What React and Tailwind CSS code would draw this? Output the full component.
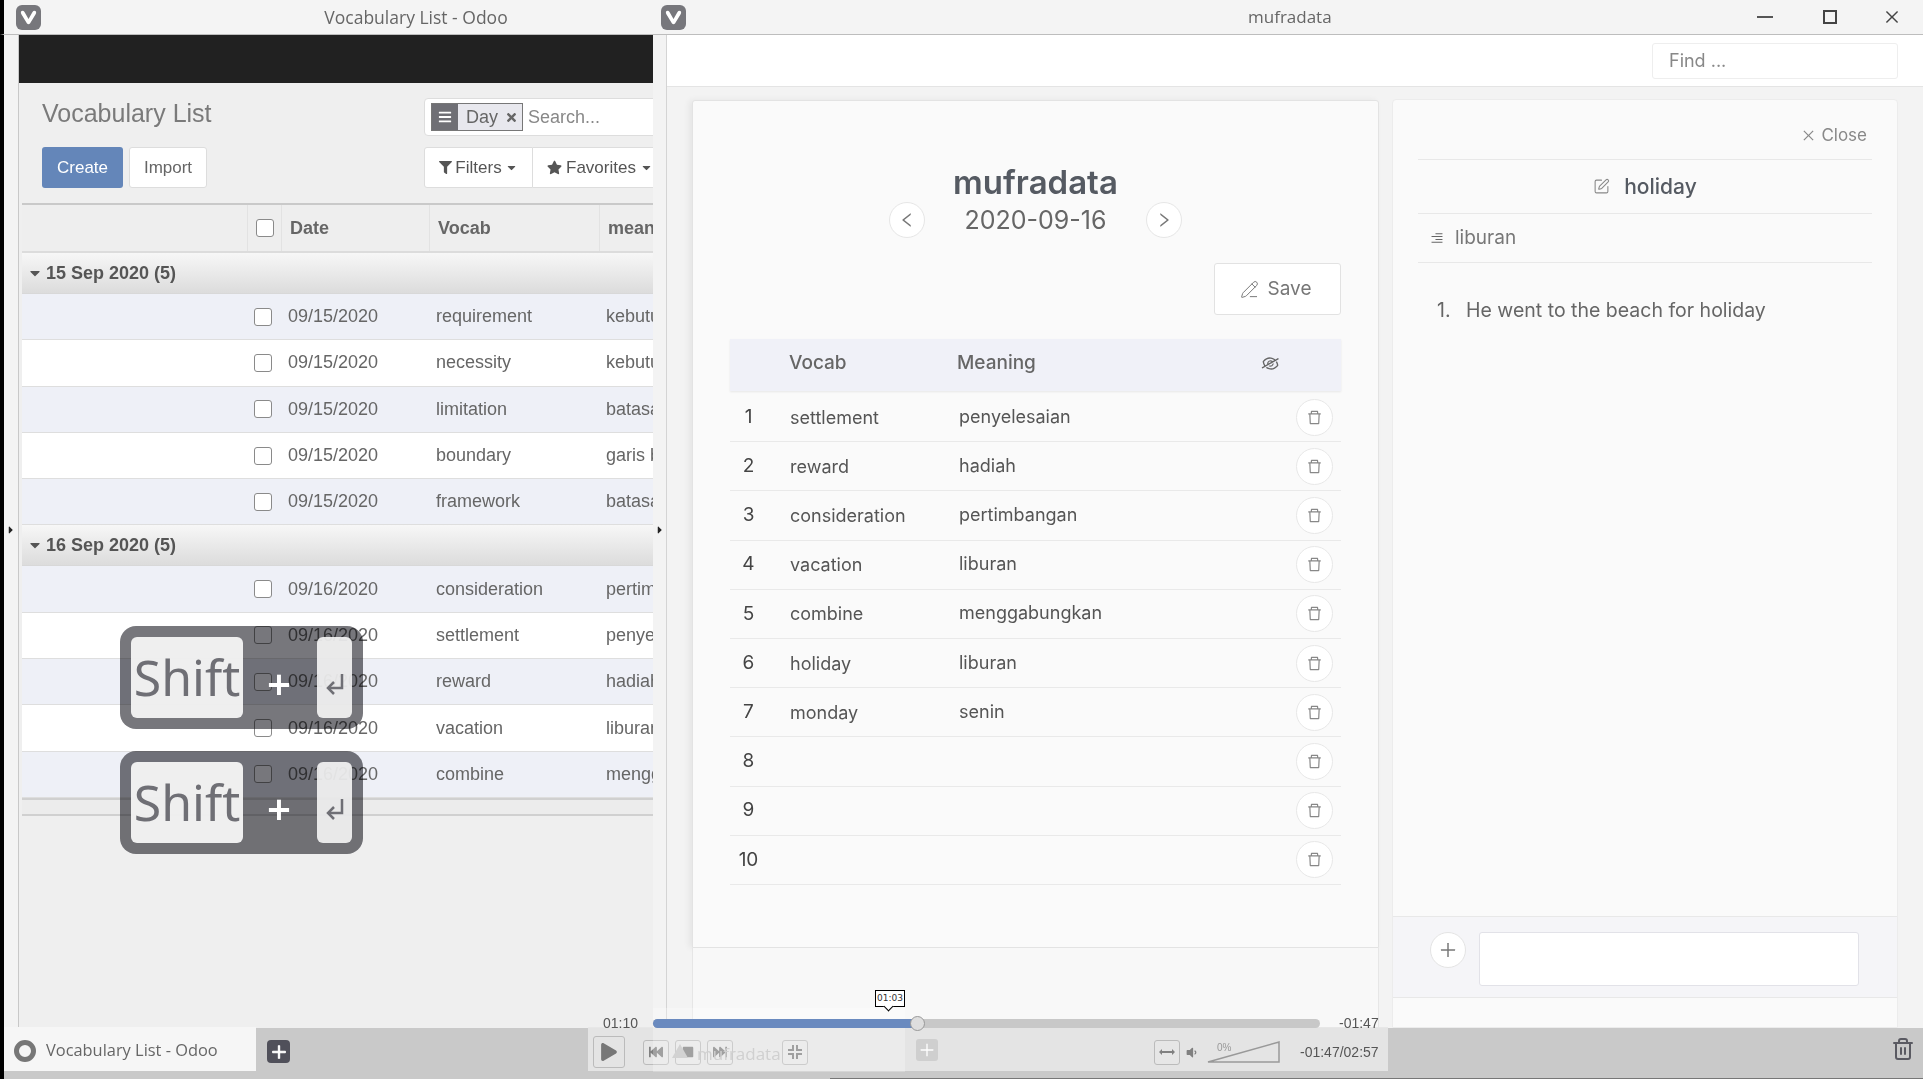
import React from 'react'
import { FaBars, FaFilter, FaStar, FaTimes, FaCaretDown, FaCaretRight, FaPlay, FaFastBackward, FaFastForward, FaStop, FaVolumeDown } from 'react-icons/fa'
import {
  AiOutlineAlignRight,
  AiOutlineClose,
  AiOutlineDelete,
  AiOutlineEyeInvisible,
  AiOutlineLeft,
  AiOutlinePlus,
  AiOutlineRight,
} from 'react-icons/ai'
import { PencilLine, SquarePen, Trash2 } from 'lucide-react'

const GROUPS = [
  {
    label: '15 Sep 2020 (5)',
    rows: [
      ['09/15/2020', 'requirement', 'kebutuhan'],
      ['09/15/2020', 'necessity', 'kebutuhan'],
      ['09/15/2020', 'limitation', 'batasan'],
      ['09/15/2020', 'boundary', 'garis batas'],
      ['09/15/2020', 'framework', 'batasan'],
    ],
  },
  {
    label: '16 Sep 2020 (5)',
    rows: [
      ['09/16/2020', 'consideration', 'pertimbangan'],
      ['09/16/2020', 'settlement', 'penyelesaian'],
      ['09/16/2020', 'reward', 'hadiah'],
      ['09/16/2020', 'vacation', 'liburan'],
      ['09/16/2020', 'combine', 'menggabungkan'],
    ],
  },
]

const VOCAB = [
  ['settlement', 'penyelesaian'],
  ['reward', 'hadiah'],
  ['consideration', 'pertimbangan'],
  ['vacation', 'liburan'],
  ['combine', 'menggabungkan'],
  ['holiday', 'liburan'],
  ['monday', 'senin'],
  ['', ''],
  ['', ''],
  ['', ''],
]

function VivaldiIcon() {
  return (
    <div className="w-[25px] h-[25px] shrink-0 rounded-[6px] bg-[#77777c] flex items-center justify-center">
      <svg width="17" height="15" viewBox="0 0 17 15">
        <path d="M1 1.5 Q3 0 4.5 2 L8.5 9 L12.5 2 Q14 0 16 1.5 Q16.500 3 15.500 4.500 L10 13.500 Q8.500 15 7 13.500 L1.500 4.500 Q0.500 3 1 1.500Z" fill="#fff" />
      </svg>
    </div>
  )
}

function Check() {
  return <div className="w-[18px] h-[18px] rounded-[3px] border border-[#8a8a8a] bg-white" />
}

function OdooRow({ row, odd }) {
  return (
    <div className={`h-[46.300px] grid grid-cols-[232px_34px_148px_170px_1fr] items-center border-b border-[#dedede] text-[18px] text-[#666] whitespace-nowrap ${odd ? 'bg-[#eef0f7]' : 'bg-white'}`}>
      <div />
      <div className="flex justify-start"><Check /></div>
      <div>{row[0]}</div>
      <div>{row[1]}</div>
      <div className="overflow-hidden">{row[2]}</div>
    </div>
  )
}

function OdooGroup({ group }) {
  return (
    <div>
      <div className="h-[41px] flex items-center pl-[5px] gap-[3px] bg-gradient-to-b from-[#f7f7f7] to-[#dcdcdc] border-b border-[#d8d8d8] text-[18px] font-bold text-[#555]">
        <FaCaretDown className="text-[#555] text-[16px]" />
        <span>{group.label}</span>
      </div>
      {group.rows.map((r, i) => (
        <OdooRow key={r[1]} row={r} odd={i % 2 === 0} />
      ))}
    </div>
  )
}

function LeftWindow() {
  return (
    <div className="w-[667px] flex bg-[#f3f3f3] border-r border-[#d4d4d4] border-l-[4px] border-l-black font-['Liberation_Sans',sans-serif]">
      <div className="w-[14px]" />
      <div className="w-[635px] flex flex-col bg-[#efefef] border-l border-[#c8c8c8] overflow-hidden">
        <div className="h-[48px] shrink-0 bg-[#212121]" />
        <div className="h-[120px] shrink-0 relative px-[23px] pt-[15px]">
          <div className="flex justify-between">
            <div className="text-[25px] leading-[32px] text-[#7a7a7a] -mt-px">Vocabulary List</div>
            <div className="w-[240px] mr-[-34px] h-[38px] bg-white border border-[#ddd] rounded-l-[4px] flex items-center pl-[6px] shrink-0">
              <div className="h-[28px] w-[92px] flex items-center border border-[#777] bg-[#e8e8ee] text-[#666] text-[18px]">
                <div className="w-[26px] h-full bg-[#6f6f75] flex items-center justify-center"><FaBars className="text-white text-[14px]" /></div>
                <span className="ml-[8px]">Day</span>
                <FaTimes className="ml-[7px] text-[13px] text-[#666]" />
              </div>
              <span className="ml-[5px] text-[18px] text-[#888]">Search...</span>
            </div>
          </div>
          <div className="flex justify-between mt-[11px] text-[17px]">
            <div className="flex gap-[6px]">
              <div className="w-[81px] h-[41px] rounded-[3px] bg-[#6486b9] text-white flex items-center justify-center">Create</div>
              <div className="w-[78px] h-[41px] rounded-[3px] bg-white border border-[#ddd] text-[#666] flex items-center justify-center">Import</div>
            </div>
            <div className="flex h-[41px] w-[240px] mr-[-34px] shrink-0 text-[#555] whitespace-nowrap">
              <div className="w-[109px] bg-white border border-[#ddd] rounded-l-[3px] flex items-center justify-center gap-[3px]">
                <FaFilter className="text-[13px] text-[#555]" />
                <span>Filters</span>
                <FaCaretDown className="text-[13px]" />
              </div>
              <div className="flex-1 bg-white border border-[#ddd] border-l-0 flex items-center pl-[14px] gap-[4px]">
                <FaStar className="text-[15px] text-[#555]" />
                <span>Favorites</span>
                <FaCaretDown className="text-[13px]" />
              </div>
            </div>
          </div>
        </div>
        <div className="ml-[3px] border-t-2 border-[#c9c9c9]">
          <div className="h-[48px] grid grid-cols-[226px_34px_148px_170px_1fr] items-center border-b-2 border-[#dcdcdc] bg-[#eeeeee] text-[18px] font-bold text-[#666] whitespace-nowrap">
            <div className="h-full ml-[1px] border-r border-[#e2e2e2]" />
            <div className="h-full flex items-center justify-center border-r border-[#e2e2e2]"><Check /></div>
            <div className="h-full flex items-center pl-[8px] border-r border-[#e2e2e2]">Date</div>
            <div className="h-full flex items-center pl-[8px] border-r border-[#e2e2e2]">Vocab</div>
            <div className="pl-[8px] overflow-hidden">meaning</div>
          </div>
          {GROUPS.map((g) => (
            <OdooGroup key={g.label} group={g} />
          ))}
          <div className="h-[18px] bg-[#ececec] border-t-2 border-b-2 border-[#d0d0d0]" />
        </div>
      </div>
    </div>
  )
}

function VocabRow({ index, row }) {
  return (
    <div className="h-[49.200px] grid grid-cols-[60px_169px_1fr_45px] items-center border-b border-[#e9e9e9] text-[18px] text-[#555] whitespace-nowrap">
      <div className="text-center pr-[23px] text-[#444] text-[19px]">{index}</div>
      <div>{row[0]}</div>
      <div className="mt-[-2px]">{row[1]}</div>
      <div>
        <div className="w-[37px] h-[37px] rounded-full bg-white border border-[#e8e8e8] flex items-center justify-center">
          <AiOutlineDelete className="text-[17px] text-[#888]" />
        </div>
      </div>
    </div>
  )
}

function CenterCard() {
  return (
    <div className="w-[687px] flex flex-col shrink-0 mt-[13px]">
      <div className="h-[848px] shrink-0 bg-[#fafafa] rounded-t-[3px] border border-[#e3e3e3] shadow-[-3px_0_6px_rgba(0,0,0,0.06)] pt-[61px] px-[37px]">
        <div className="text-center text-[33px] leading-[40px] font-semibold text-[#555a62]">mufradata</div>
        <div className="flex items-center justify-center gap-[38px]">
          <div className="w-[36px] h-[36px] rounded-full bg-white border border-[#e6e6e6] flex items-center justify-center">
            <AiOutlineLeft className="text-[18px] text-[#777]" />
          </div>
          <div className="w-[145px] text-center text-[25px] leading-[36px] text-[#666]">2020-09-16</div>
          <div className="w-[36px] h-[36px] rounded-full bg-white border border-[#e6e6e6] flex items-center justify-center">
            <AiOutlineRight className="text-[18px] text-[#777]" />
          </div>
        </div>
        <div className="flex justify-end mt-[25px]">
          <div className="w-[127px] h-[52px] bg-white border border-[#e2e2e2] rounded-[3px] flex items-center justify-center gap-[9px] text-[19px] text-[#777]">
            <PencilLine size={19} strokeWidth={1.25} className="-ml-[4px]" />
            <span>Save</span>
          </div>
        </div>
        <div className="mt-[24px] mb-[2px] h-[52px] pb-[4px] grid grid-cols-[59px_168px_1fr_80px] items-center bg-[#f0f1f8] shadow-[0_1px_2px_rgba(0,0,0,0.08)] text-[19px] font-medium text-[#666]">
          <div />
          <div>Vocab</div>
          <div>Meaning</div>
          <div><AiOutlineEyeInvisible className="text-[19px] text-[#666] rotate-[15deg]" /></div>
        </div>
        {VOCAB.map((r, i) => (
          <VocabRow key={i} index={i + 1} row={r} />
        ))}
      </div>
      <div className="flex-1 bg-[#f8f8f8] border-x border-[#e6e6e6]" />
    </div>
  )
}

function SidePanel() {
  return (
    <div className="w-[506px] shrink-0 mt-[12px] ml-[13px] flex flex-col bg-[#fafafa] border border-[#ececec] rounded-t-[4px]">
      <div className="flex-1 px-[25px]">
        <div className="h-[60px] flex items-center justify-end gap-[5px] pr-[5px] pt-[12px] border-b border-[#e8e8e8] text-[17px] text-[#888]">
          <AiOutlineClose className="text-[15px]" />
          <span>Close</span>
        </div>
        <div className="h-[54px] flex items-center justify-center gap-[14px] border-b border-[#e8e8e8] text-[21px] font-medium text-[#555a62]">
          <SquarePen size={17} strokeWidth={1.5} className="text-[#888]" />
          <span>holiday</span>
        </div>
        <div className="h-[49px] flex items-center gap-[11px] pl-[12px] border-b border-[#e8e8e8] text-[19px] text-[#777]">
          <AiOutlineAlignRight className="text-[14px] text-[#666]" />
          <span>liburan</span>
        </div>
        <div className="flex mt-[35px] pl-[19px] text-[19.500px] leading-[24px] text-[#666]">
          <span className="w-[29px]">1.</span>
          <span>He went to the beach for holiday</span>
        </div>
      </div>
      <div className="h-[82px] shrink-0 flex gap-[13px] px-[37px] pt-[15px] bg-[#f5f5f8] border-y border-[#e8e8e8]">
        <div className="w-[36px] h-[36px] rounded-full bg-white border border-[#e4e4e4] flex items-center justify-center">
          <AiOutlinePlus className="text-[20px] text-[#777]" />
        </div>
        <div className="w-[380px] h-[54px] bg-white border border-[#e2e2e8] rounded-[3px]" />
      </div>
      <div className="h-[29px] shrink-0" />
    </div>
  )
}

function RightWindow() {
  return (
    <div className="flex-1 flex flex-col min-w-0 bg-[#f3f3f3] font-['Inter',sans-serif]">
      <div className="h-[52px] shrink-0 bg-white border-b border-[#e4e4e4] flex items-center justify-end pr-[25px]">
        <div className="w-[246px] h-[36px] border border-[#eeeeee] rounded-[3px] pl-[16px] flex items-center text-[18px] text-[#888]">Find ...</div>
      </div>
      <div className="flex-1 flex pl-[25px] min-h-0">
        <CenterCard />
        <SidePanel />
      </div>
    </div>
  )
}

function ShiftKeys({ top }) {
  return (
    <>
      <div className={`absolute left-[120px] w-[243px] h-[103px] rounded-[16px] bg-[#77777c] mix-blend-multiply ${top}`} />
      <div className={`absolute left-[120px] w-[243px] h-[103px] font-['Noto_Sans',sans-serif] ${top}`}>
        <div className="absolute left-[11px] top-[11px] w-[112px] h-[81px] rounded-[6px] bg-[#f6f6f6]/95 flex items-center justify-center text-[50px] text-[#6f6f75]">Shift</div>
        <div className="absolute left-[147px] top-[36px] text-white text-[42px] leading-[44px] font-semibold">+</div>
        <div className="absolute left-[197px] top-[11px] w-[35px] h-[81px] rounded-[6px] bg-[#f6f6f6]/90 flex items-center justify-center pt-[14px]">
          <svg width="20" height="24" viewBox="0 0 20 24" fill="none" stroke="#6f6f75" strokeWidth="2.500">
            <path d="M17 1v14H3" />
            <path d="M9 9l-6 6 6 6" />
          </svg>
        </div>
      </div>
    </>
  )
}

function CtlButton({ className, children }) {
  return (
    <div className={`h-[25px] w-[26px] border border-[#bbb] rounded-[3px] bg-[#e6e6e6] flex items-center justify-center text-[#808080] ${className || ''}`}>
      {children}
    </div>
  )
}

function VideoControls() {
  return (
    <div className="absolute left-[588px] top-[990px] w-[800px] h-[82px] font-['DejaVu_Sans',sans-serif] text-[#555]">
      <div className="absolute left-[65px] top-[18px] w-[252px] h-[64px] bg-white/25" />
      <div className="absolute left-[287px] top-0 w-[30px] h-[17px] bg-white border border-black flex items-center justify-center text-[9px] text-[#333]">01:03</div>
      <div className="absolute left-[297px] top-[13px] w-[7px] h-[7px] border-b border-r border-black bg-white rotate-45" />
      <div className="h-[28px]" />
      <div className="relative flex items-center h-[10px] pl-[15px] font-['Liberation_Sans',sans-serif]">
        <span className="w-[50px] text-[14px]">01:10</span>
        <div className="w-[667px] h-[9px] rounded-full bg-[#c8c8c8] relative">
          <div className="h-full w-[264px] rounded-l-full bg-[#6a8abf]" />
          <div className="absolute left-[257px] top-[-3px] w-[15px] h-[15px] rounded-full bg-[#dedede] border border-[#999]" />
        </div>
        <span className="ml-[19px] text-[14px]">-01:47</span>
      </div>
      <div className="h-[44px] bg-[#e6e6e6]/95 flex items-center pl-[5px] pt-[6px] -mt-[1px]">
        <div className="w-[32px] h-[32px] border border-[#bbb] rounded-[3px] flex items-center justify-center">
          <FaPlay className="text-[#777] text-[18px]" />
        </div>
        <CtlButton className="ml-[18px]"><FaFastBackward className="text-[14px]" /></CtlButton>
        <CtlButton className="ml-[6px]"><FaStop className="text-[12px]" /></CtlButton>
        <CtlButton className="ml-[6px]"><FaFastForward className="text-[14px]" /></CtlButton>
        <CtlButton className="ml-[49px]">
          <svg width="16" height="16" viewBox="0 0 16 16" fill="#808080">
            <path d="M5 1h2v6H1V5h4zM9 1h2v4h4v2H9zM1 9h6v6H5v-4H1zM9 9h6v2h-4v4H9z" />
          </svg>
        </CtlButton>
        <div className="absolute left-[328px] top-[49px] w-[22px] h-[22px] rounded-[3px] bg-[#cfcfcf] flex items-center justify-center">
          <AiOutlinePlus className="text-white text-[18px]" />
        </div>
        <svg className="absolute left-[84px] top-[54px]" width="16" height="14" viewBox="0 0 16 14" fill="#d2d2d2"><path d="M8 0l8 14H0z" /></svg>
        <span className="absolute left-[109px] top-[51px] text-[17px] text-[#d0d0d0] font-['Open_Sans',sans-serif]">mufradata</span>
        <CtlButton className="ml-[346px]">
          <svg width="16" height="8" viewBox="0 0 16 8" fill="#808080"><path d="M0 4l3-3v2h10V1l3 3-3 3V5H3v2z" /></svg>
        </CtlButton>
        <FaVolumeDown className="ml-[5px] text-[#808080] text-[13px]" />
        <div className="ml-[9px] relative w-[73px] h-[22px]">
          <svg width="73" height="22" viewBox="0 0 73 22" fill="none" stroke="#999" strokeWidth="1.500">
            <path d="M1 21 L72 1 V21 Z" />
          </svg>
          <span className="absolute left-[10px] top-[-1px] text-[10px] text-[#999] font-['Liberation_Sans',sans-serif]">0%</span>
        </div>
        <span className="ml-[20px] text-[14px] font-['Liberation_Sans',sans-serif]">-01:47/02:57</span>
      </div>
    </div>
  )
}

export default function App() {
  return (
    <div className="relative w-[1923px] h-[1079px] overflow-hidden flex flex-col bg-[#f3f3f3]">
      <div className="h-[35px] shrink-0 flex bg-[#f4f4f4] border-b border-[#bdbdbd] border-l-[4px] border-l-black text-[17px] text-[#666] font-['Open_Sans',sans-serif]">
        <div className="w-[657px] flex items-center pl-[12px]">
          <VivaldiIcon />
          <div className="flex-1 text-center pl-[130px] text-[17.500px]">Vocabulary List - Odoo</div>
        </div>
        <div className="flex-1 flex items-center">
          <VivaldiIcon />
          <div className="ml-[562px]">mufradata</div>
          <div className="ml-auto mr-[22px] flex items-center text-[#444]">
            <div className="w-[16px] h-[2px] bg-[#555]" />
            <div className="w-[14px] h-[14px] border-2 border-[#444] ml-[50px]" />
            <AiOutlineClose className="text-[18px] ml-[46px]" />
          </div>
        </div>
      </div>

      <div className="h-[993px] shrink-0 flex min-h-0">
        <LeftWindow />
        <RightWindow />
      </div>

      <div className="flex-1 flex bg-[#c9c9c9] border-l-[4px] border-l-black">
        <div className="w-[252px] h-[44px] -mt-px pt-[3px] bg-[#f6f6f6] flex items-center pl-[10px] gap-[10px] text-[16.400px] text-[#666] font-['Open_Sans',sans-serif] whitespace-nowrap">
          <div className="w-[22px] h-[22px] rounded-full border-[5px] border-[#777]" />
          <span>Vocabulary List - Odoo</span>
        </div>
        <div className="ml-[11px] mt-[12px] w-[23px] h-[23px] rounded-[4px] bg-[#50505a] flex items-center justify-center">
          <AiOutlinePlus className="text-white text-[18px] stroke-[60px]" />
        </div>
        <div className="flex-1" />
        <Trash2 size={24} strokeWidth={2} className="text-[#5a5a62] mt-[9px] mr-[8px]" />
      </div>

      <FaCaretRight className="absolute left-[5px] top-[524px] text-[12px] text-[#222]" />
      <FaCaretRight className="absolute left-[654px] top-[524px] text-[12px] text-[#222]" />
      <ShiftKeys top="top-[626px]" />
      <ShiftKeys top="top-[751px]" />
      <VideoControls />
      <div className="absolute left-[830px] right-0 bottom-0 h-px bg-[#777]" />
    </div>
  )
}
